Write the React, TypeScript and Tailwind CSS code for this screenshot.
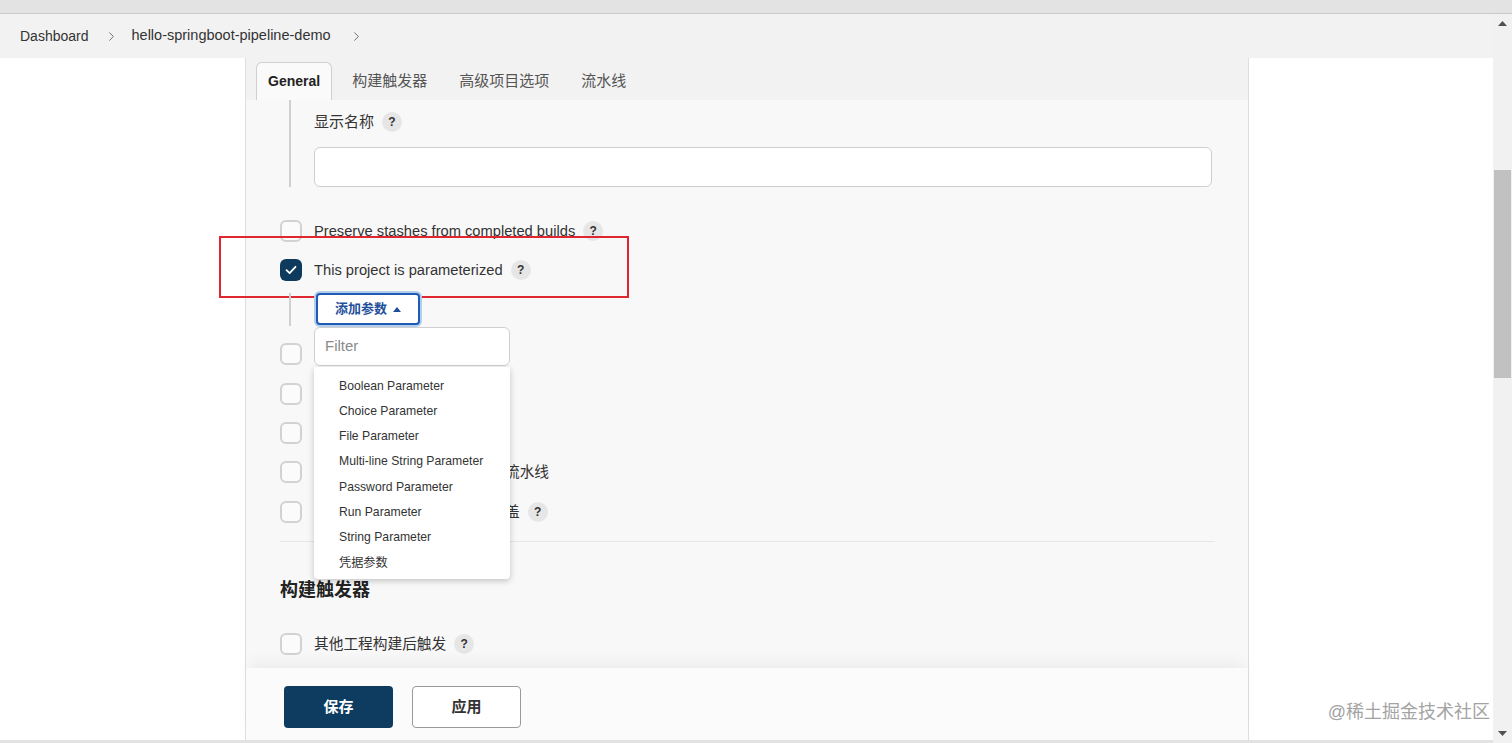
import React from "react";
import { ChevronRight } from "lucide-react";

const font = { fontFamily: '"Liberation Sans", "Noto Sans CJK SC", sans-serif' };

function Help() {
  return (
    <span className="ml-[8px] inline-flex h-[20px] w-[20px] flex-none items-center justify-center rounded-full bg-[#e6e6e6] text-[12px] font-bold text-[#333]">
      ?
    </span>
  );
}

function Checkbox({ checked = false }: { checked?: boolean }) {
  if (checked) {
    return (
      <span className="flex h-[22px] w-[22px] flex-none items-center justify-center rounded-[6px] bg-[#0e3a5e]">
        <svg width="12" height="10" viewBox="0 0 12 10" fill="none">
          <path d="M1.5 5.2L4.6 8.2L10.5 1.8" stroke="white" strokeWidth="1.8" strokeLinecap="round" strokeLinejoin="round" />
        </svg>
      </span>
    );
  }
  return <span className="h-[22px] w-[22px] flex-none rounded-[6px] border-2 border-[#d2d2d2] bg-[#fbfbfb]" />;
}

function Row({ label, help = true, checked = false, className = "" }: { label: string; help?: boolean; checked?: boolean; className?: string }) {
  return (
    <div className={`flex h-[22px] items-center ${className}`}>
      <Checkbox checked={checked} />
      <span className="ml-[12px] whitespace-nowrap text-[14.7px] text-[#333]">{label}</span>
      {help && <Help />}
    </div>
  );
}

const params = [
  "Boolean Parameter",
  "Choice Parameter",
  "File Parameter",
  "Multi-line String Parameter",
  "Password Parameter",
  "Run Parameter",
  "String Parameter",
  "凭据参数",
];

export default function App() {
  return (
    <div className="relative flex h-[743px] w-full flex-col overflow-hidden bg-white" style={font}>
      {/* browser chrome strip */}
      <div className="h-[14px] flex-none border-b border-[#c9c9c9] bg-[#e3e3e3]" />

      <div className="flex min-h-0 flex-1">
        <div className="flex min-w-0 flex-1 flex-col">
          {/* breadcrumb */}
          <div className="flex h-[44px] flex-none items-center bg-[#f2f2f2] pl-[20px] text-[14px] text-[#333]">
            <span>Dashboard</span>
            <ChevronRight size={15} strokeWidth={1.5} className="ml-[15px] text-[#666]" />
            <span className="ml-[13px] text-[14.5px]">hello-springboot-pipeline-demo</span>
            <ChevronRight size={15} strokeWidth={1.5} className="ml-[18px] text-[#666]" />
          </div>

          <div className="flex min-h-0 flex-1">
            <div className="w-[245px] flex-none bg-white" />

            {/* config panel */}
            <div className="flex w-[1004px] flex-none flex-col border-x border-[#dedede] bg-[#f8f8f8]">
              <div className="flex h-[42px] flex-none items-end gap-[8px] bg-[#f2f2f2] pl-[10px]">
                <div className="flex h-[38px] items-center rounded-t-[6px] border border-b-0 border-[#d0d0d0] bg-[#fafafa] px-[11px] text-[14px] font-bold text-[#222]">
                  General
                </div>
                <div className="flex h-[38px] items-center px-[12px] text-[15px] text-[#555]">构建触发器</div>
                <div className="flex h-[38px] items-center px-[12px] text-[15px] text-[#555]">高级项目选项</div>
                <div className="flex h-[38px] items-center px-[12px] text-[15px] text-[#555]">流水线</div>
              </div>

              <div className="min-h-0 flex-1 overflow-hidden px-[34px]">
                {/* display name */}
                <div className="ml-[9px] border-l-2 border-[#d0d0d0] pl-[23px] pt-[12px]">
                  <div className="flex h-[20px] items-center">
                    <span className="text-[15px] text-[#333]">显示名称</span>
                    <Help />
                  </div>
                  <div className="mt-[15px] h-[40px] w-[898px] rounded-[6px] border border-[#cfcfcf] bg-white" />
                </div>

                <Row label="Preserve stashes from completed builds" className="mt-[33px]" />
                <Row label="This project is parameterized" checked className="mt-[17px]" />

                <div className="relative z-10 mt-[12px] ml-[9px] h-[33px] border-l-2 border-[#d0d0d0] pl-[25px]">
                  <button className="flex h-[32px] w-[104px] items-center justify-center gap-[6px] rounded-[4px] border-2 border-[#1e5bb5] bg-white text-[13px] font-bold text-[#1f4f9a] shadow-[0_0_0_2px_#b3cdec]">
                    添加参数
                    <svg width="8" height="5" viewBox="0 0 8 5">
                      <path d="M0 5L4 0L8 5Z" fill="#1f4f9a" />
                    </svg>
                  </button>

                  {/* dropdown */}
                  <div className="absolute left-[23px] top-[34px] w-[196px]">
                    <div className="flex h-[39px] items-center rounded-[6px] border border-[#cfcfcf] bg-white pl-[10px] text-[15px] text-[#8a8a8a]">
                      Filter
                    </div>
                    <div className="mt-[1px] rounded-b-[4px] bg-white pb-[4px] pt-[6px] shadow-[0_2px_6px_rgba(0,0,0,0.22)]">
                      {params.map((p) => (
                        <div key={p} className="flex h-[25.3px] items-center pl-[25px] text-[12.2px] text-[#333]">
                          {p}
                        </div>
                      ))}
                    </div>
                  </div>
                </div>

                <Row label="Throttle builds" className="mt-[17px]" />
                <Row label="不允许并发构建" className="mt-[18px]" />
                <Row label="GitHub 项目" className="mt-[17px]" />
                <Row label="当控制器重新启动时不要恢复流水线" help={false} className="mt-[17px]" />
                <Row label="流水线效率、持久保存设置覆盖" className="mt-[18px]" />

                <div className="mt-[18px] h-px w-[935px] bg-[#e6e6e6]" />

                <div className="mt-[35px] flex h-[26px] items-center text-[18px] font-bold text-[#222]">构建触发器</div>

                <Row label="其他工程构建后触发" className="mt-[30px]" />
              </div>

              {/* footer */}
              <div className="relative flex h-[72px] flex-none items-start gap-[19px] bg-[#fbfbfb] pl-[38px] pt-[18px] shadow-[0_-10px_14px_-4px_rgba(0,0,0,0.05)]">
                <button className="h-[42px] w-[109px] rounded-[4px] bg-[#0d3c60] text-[15px] font-bold text-white">保存</button>
                <button className="h-[42px] w-[109px] rounded-[4px] border border-[#9a9a9a] bg-white text-[15px] font-bold text-[#333]">应用</button>
              </div>
            </div>

            <div className="flex-1 bg-white" />
          </div>

          <div className="h-[3px] flex-none bg-[#e2e2e2]" />
        </div>

        {/* scrollbar */}
        <div className="flex w-[19px] flex-none flex-col bg-[#f1f1f1]">
          <div className="flex h-[19px] flex-none items-center justify-center">
            <svg width="9" height="5" viewBox="0 0 9 5">
              <path d="M0 5L4.5 0L9 5Z" fill="#505050" />
            </svg>
          </div>
          <div className="h-[137px] flex-none" />
          <div className="mx-[1px] h-[208px] flex-none bg-[#c1c1c1]" />
          <div className="flex-1" />
          <div className="flex h-[19px] flex-none items-center justify-center">
            <svg width="9" height="5" viewBox="0 0 9 5">
              <path d="M0 0L4.5 5L9 0Z" fill="#505050" />
            </svg>
          </div>
        </div>
      </div>

      {/* annotation overlay */}
      <div className="pointer-events-none absolute left-[219px] top-[236px] h-[62px] w-[410px] border-2 border-[#e0262f]" />

      {/* watermark */}
      <div className="pointer-events-none absolute right-[22px] top-[699px] text-[18px] text-[#a3a3a3]">@稀土掘金技术社区</div>
    </div>
  );
}
